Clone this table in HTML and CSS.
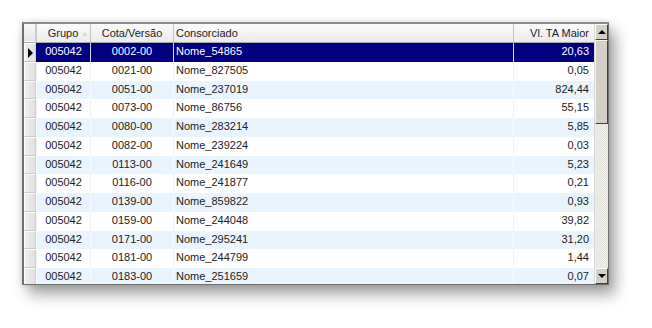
FILE: index.html
```html
<!DOCTYPE html>
<html>
<head>
<meta charset="utf-8">
<link rel="stylesheet" href="styles.css">
</head>
<body>
<div class="frame">
  <div class="grid">
    <div class="head">
      <div class="ind"></div>
      <div class="c grupo hg">Grupo <span class="sort">▲</span></div>
      <div class="c cota">Cota/Versão</div>
      <div class="c cons">Consorciado</div>
      <div class="c val">Vl. TA Maior</div>
    </div>
    <div class="body">
      <div class="row sel"><div class="ind"><span class="arrow"></span></div><div class="c grupo">005042</div><div class="c cota">0002-00</div><div class="c cons">Nome_54865</div><div class="c val">20,63</div></div>
      <div class="row"><div class="ind"></div><div class="c grupo">005042</div><div class="c cota">0021-00</div><div class="c cons">Nome_827505</div><div class="c val">0,05</div></div>
      <div class="row alt"><div class="ind"></div><div class="c grupo">005042</div><div class="c cota">0051-00</div><div class="c cons">Nome_237019</div><div class="c val">824,44</div></div>
      <div class="row"><div class="ind"></div><div class="c grupo">005042</div><div class="c cota">0073-00</div><div class="c cons">Nome_86756</div><div class="c val">55,15</div></div>
      <div class="row alt"><div class="ind"></div><div class="c grupo">005042</div><div class="c cota">0080-00</div><div class="c cons">Nome_283214</div><div class="c val">5,85</div></div>
      <div class="row"><div class="ind"></div><div class="c grupo">005042</div><div class="c cota">0082-00</div><div class="c cons">Nome_239224</div><div class="c val">0,03</div></div>
      <div class="row alt"><div class="ind"></div><div class="c grupo">005042</div><div class="c cota">0113-00</div><div class="c cons">Nome_241649</div><div class="c val">5,23</div></div>
      <div class="row"><div class="ind"></div><div class="c grupo">005042</div><div class="c cota">0116-00</div><div class="c cons">Nome_241877</div><div class="c val">0,21</div></div>
      <div class="row alt"><div class="ind"></div><div class="c grupo">005042</div><div class="c cota">0139-00</div><div class="c cons">Nome_859822</div><div class="c val">0,93</div></div>
      <div class="row"><div class="ind"></div><div class="c grupo">005042</div><div class="c cota">0159-00</div><div class="c cons">Nome_244048</div><div class="c val">39,82</div></div>
      <div class="row alt"><div class="ind"></div><div class="c grupo">005042</div><div class="c cota">0171-00</div><div class="c cons">Nome_295241</div><div class="c val">31,20</div></div>
      <div class="row"><div class="ind"></div><div class="c grupo">005042</div><div class="c cota">0181-00</div><div class="c cons">Nome_244799</div><div class="c val">1,44</div></div>
      <div class="row alt"><div class="ind"></div><div class="c grupo">005042</div><div class="c cota">0183-00</div><div class="c cons">Nome_251659</div><div class="c val">0,07</div></div>
    </div>
  </div>
  <div class="vscroll">
    <div class="btn up"><span class="tri-up"></span></div>
    <div class="track">
      <div class="thumb"></div>
    </div>
    <div class="btn down"><span class="tri-down"></span></div>
  </div>
</div>
</body>
</html>
```
FILE: styles.css
```css
html, body {
  margin: 0;
  padding: 0;
  background: #ffffff;
}
body {
  width: 652px;
  height: 328px;
  overflow: hidden;
  font-family: "Liberation Sans", Arial, sans-serif;
  font-size: 11px;
  color: #222;
}
.frame {
  margin: 22px 0 0 22px;
  width: 584px;
  height: 260px;
  border: 1px solid #6f6f6f;
  border-left: 2px solid #707070;
  border-top: 2px solid #8a8a8a;
  display: flex;
  background: #fff;
  box-shadow: 6px 9px 14px rgba(0,0,0,0.38), 0 0 6px rgba(0,0,0,0.12);
  overflow: hidden;
}
.grid {
  width: 570px;
  display: flex;
  flex-direction: column;
}
.head, .row {
  display: grid;
  grid-template-columns: 12px 54px 83px 340px 81px;
}
.head {
  height: 19px;
  background: linear-gradient(#fbfbfb, #ebebeb);
  border-bottom: 1px solid #a9a9a9;
  box-sizing: border-box;
}
.head .c {
  border-left: 1px solid #c4c4c4;
  line-height: 18px;
  color: #222;
}
.head .hg {
  padding-left: 9px;
  padding-right: 0;
}
.head .ind {
  background: linear-gradient(#f6f6f6, #e6e6e6);
}
.sort {
  font-size: 7px;
  color: #d4d4d4;
  vertical-align: 1px;
}
.row {
  height: 18.75px;
}
.c {
  padding: 0 4px;
  line-height: 18px;
  white-space: nowrap;
  overflow: hidden;
  border-left: 1px solid #f0f0f0;
}
.body .c { line-height: 17px; }
.grupo, .cota { text-align: center; }
.cons { text-align: left; padding-left: 2px; }
.val { text-align: right; padding-right: 5px; }
.ind {
  background: #e7e7e7;
  border-right: 1px solid #cfcfcf;
  border-bottom: 1px solid #fafafa;
  box-sizing: border-box;
  position: relative;
}
.row .ind {
  border-left: 1px solid #ffffff;
  border-top: 1px solid #fdfdfd;
  border-bottom: 1px solid #c8c8c8;
  background: linear-gradient(90deg, #efefef, #e0e0e0);
}
.alt { background: #eaf4fd; }
.alt .c { border-left-color: #f8fbff; }
.sel .c {
  background: #000080;
  color: #ffffff;
  border-left-color: #d8d8e8;
}
.sel .grupo { border-left-color: #000080; }
.arrow {
  position: absolute;
  left: 3px;
  top: 4px;
  width: 0;
  height: 0;
  border-top: 5px solid transparent;
  border-bottom: 5px solid transparent;
  border-left: 5px solid #000;
}
.vscroll {
  width: 14px;
  display: flex;
  flex-direction: column;
  border-left: 1px solid #d8d8d8;
}
.btn {
  height: 16px;
  flex: none;
  background: #d4d0c8;
  box-sizing: border-box;
  border: 1px solid;
  border-color: #ffffff #404040 #404040 #ffffff;
  display: flex;
  align-items: center;
  justify-content: center;
}
.down { margin-top: auto; }
.tri-up {
  width: 0; height: 0;
  border-left: 4px solid transparent;
  border-right: 4px solid transparent;
  border-bottom: 4px solid #000;
}
.tri-down {
  width: 0; height: 0;
  border-left: 4px solid transparent;
  border-right: 4px solid transparent;
  border-top: 4px solid #000;
}
.track {
  flex: 1;
  background-color: #efeeea;
  background-image: repeating-conic-gradient(#e2e0da 0 25%, #f4f3ef 0 50%);
  background-size: 2px 2px;
}
.thumb {
  height: 84px;
  background: #d4d0c8;
  box-sizing: border-box;
  border: 1px solid;
  border-color: #f4f4f4 #404040 #404040 #f4f4f4;
}
```
